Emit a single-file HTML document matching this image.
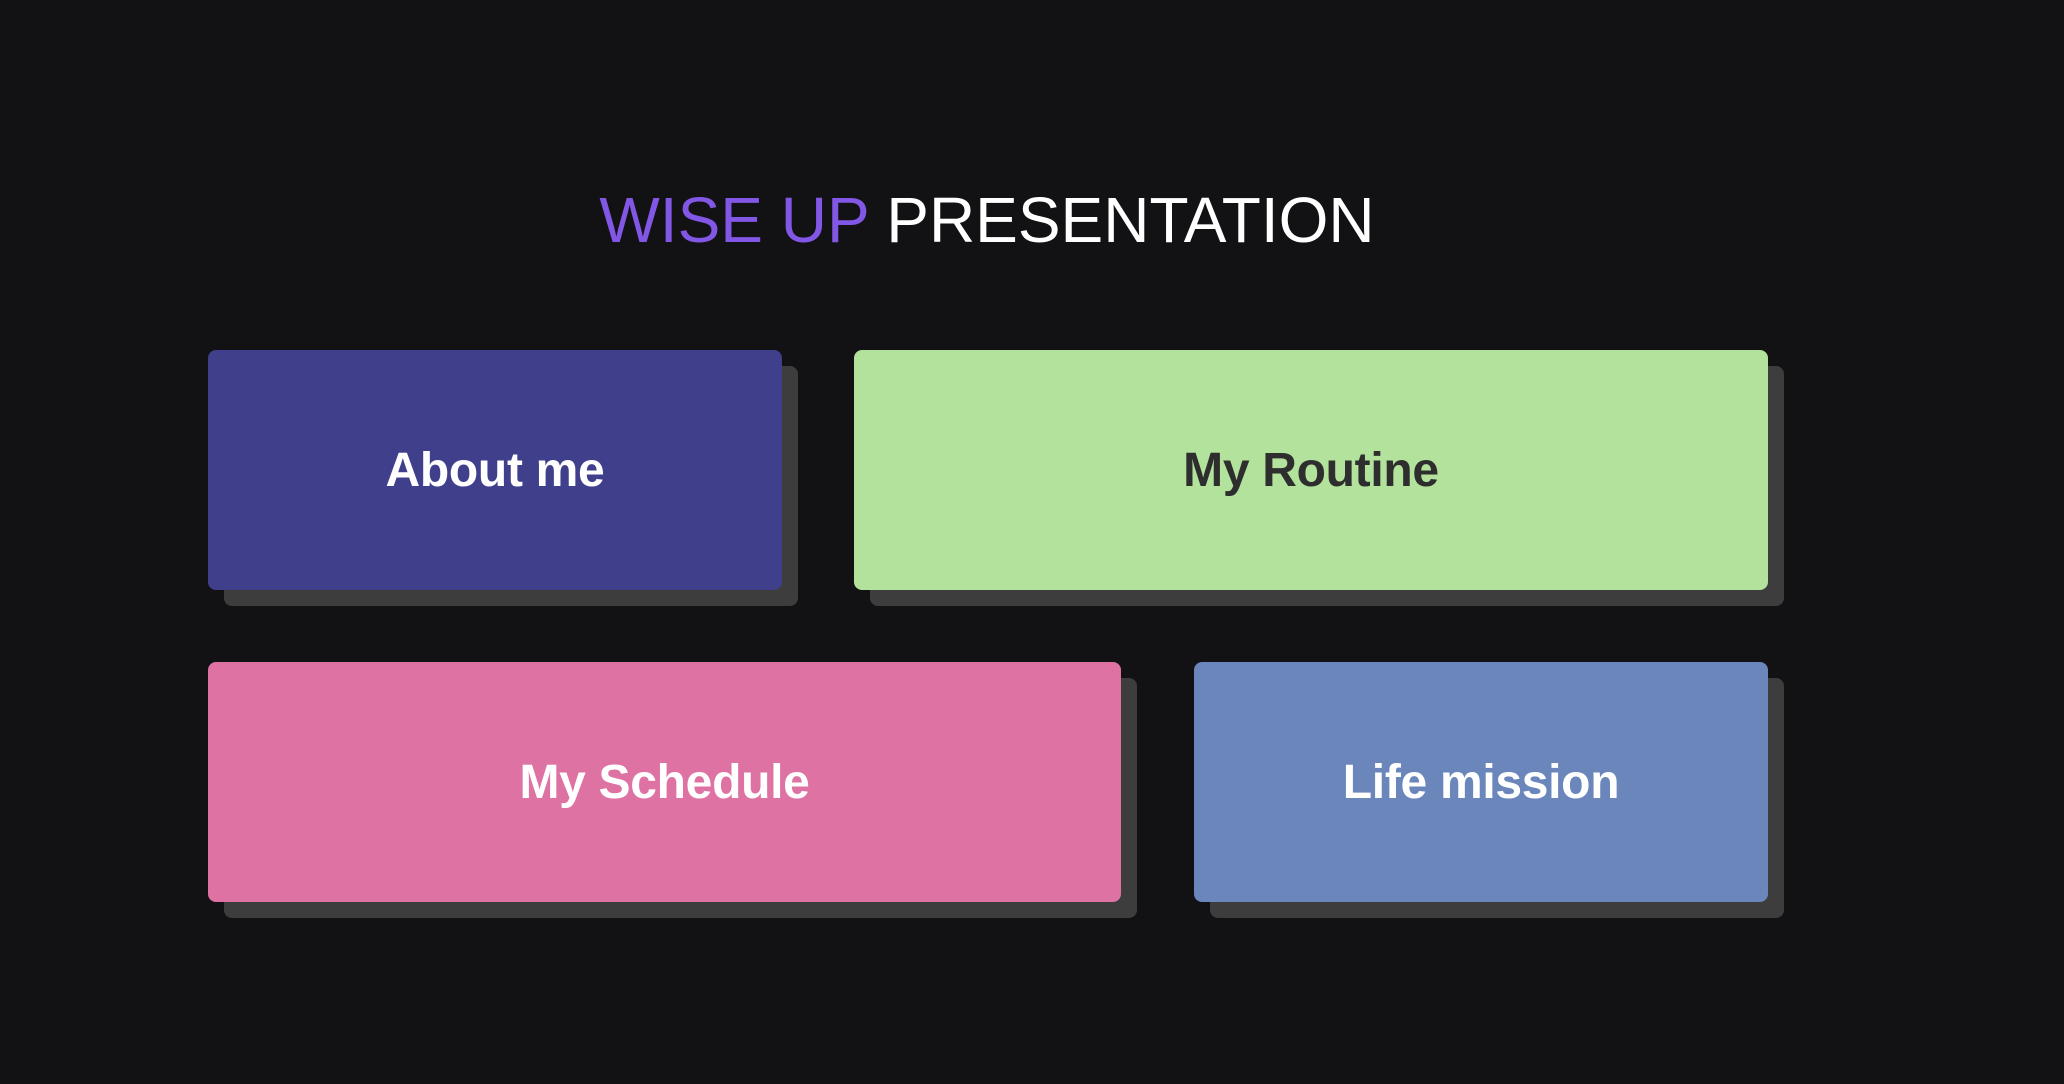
<!DOCTYPE html>
<html><head><style>
html,body{margin:0;padding:0;background:#121214;width:2064px;height:1084px;overflow:hidden;font-family:"Liberation Sans",Arial,sans-serif}
h1{position:absolute;left:0;width:1974px;text-align:center;top:180px;margin:0;font-weight:normal;font-size:64px;line-height:80px;color:#fff}
h1 span{color:#8257e5}
.c{position:absolute;border-radius:8px;display:flex;align-items:center;justify-content:center;font-weight:bold;font-size:48px;letter-spacing:-0.3px;color:#fff;box-shadow:16px 16px 0 #3d3d3d}
</style></head><body>
<h1><span>WISE UP</span> PRESENTATION</h1>
<div class="c" style="left:208px;top:350px;width:574px;height:240px;background:#403f8c">About me</div>
<div class="c" style="left:854px;top:350px;width:914px;height:240px;background:#b2e29b;color:#2e2e2e">My Routine</div>
<div class="c" style="left:208px;top:662px;width:913px;height:240px;background:#de73a3">My Schedule</div>
<div class="c" style="left:1194px;top:662px;width:574px;height:240px;background:#6a86ba">Life mission</div>
</body></html>
